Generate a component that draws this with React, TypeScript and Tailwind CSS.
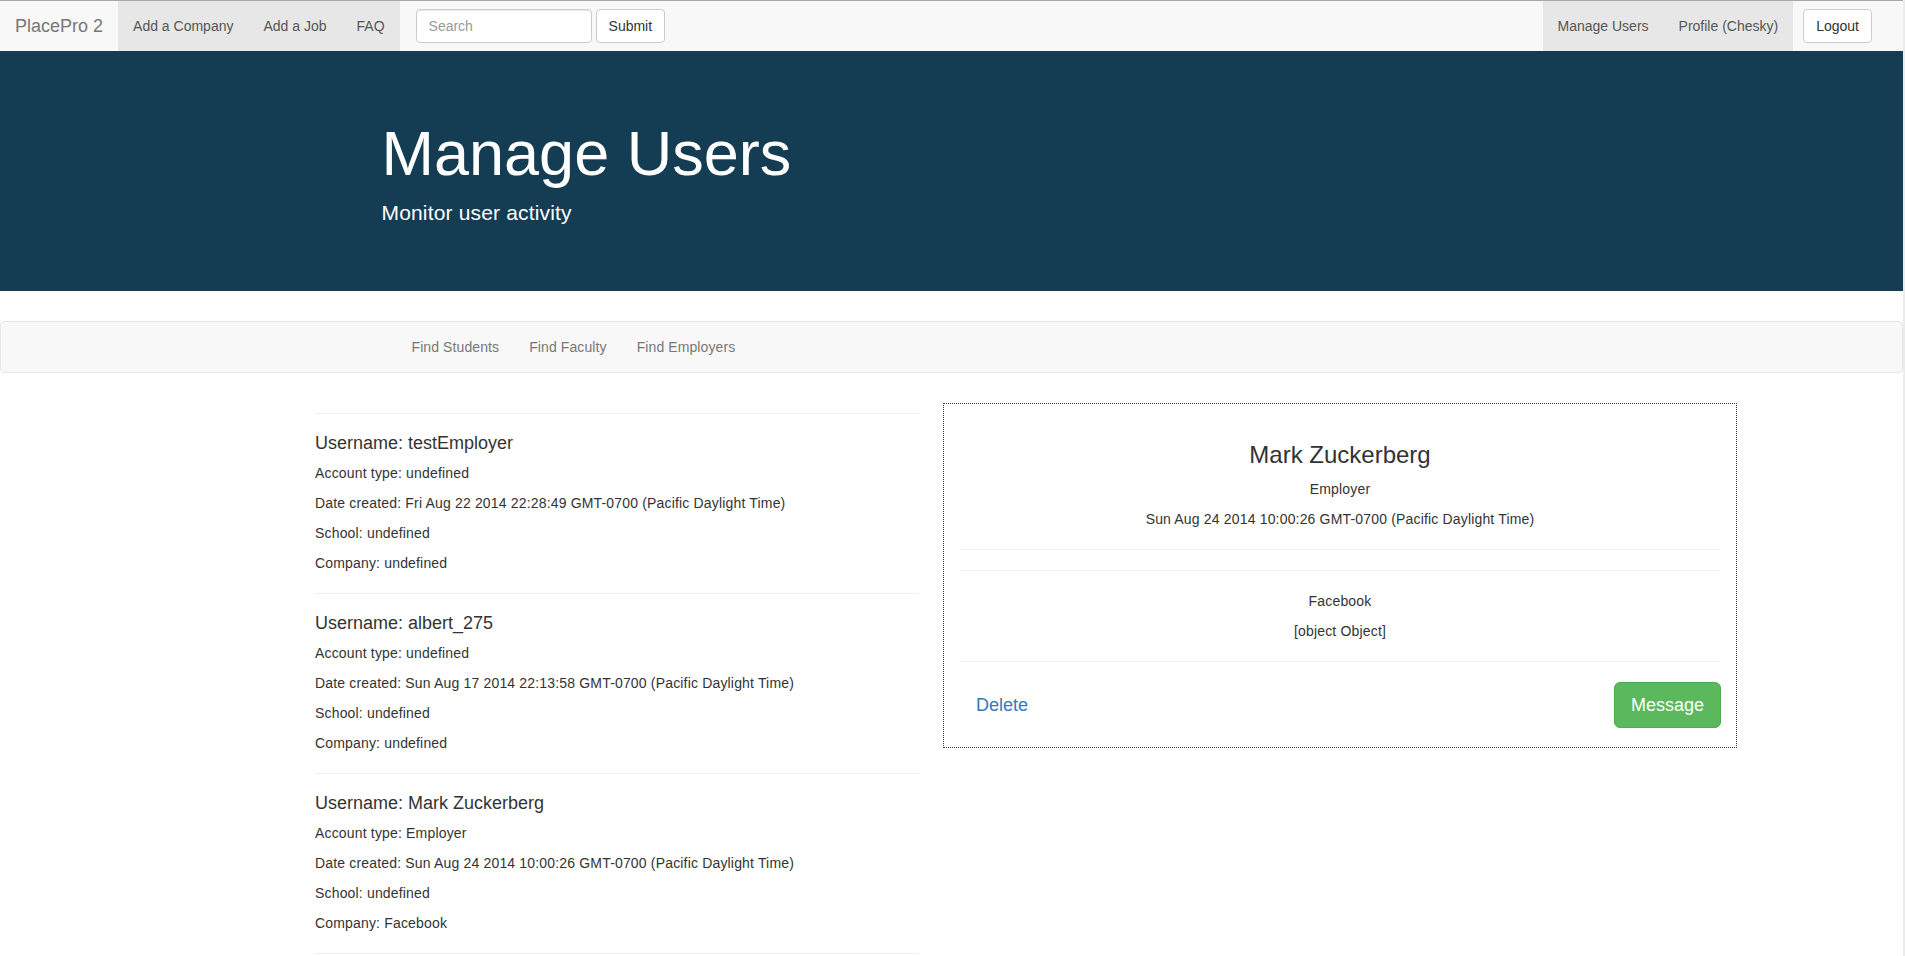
const users = [
  {
    username: 'testEmployer',
    accountType: 'undefined',
    created: 'Fri Aug 22 2014 22:28:49 GMT-0700 (Pacific Daylight Time)',
    school: 'undefined',
    company: 'undefined',
  },
  {
    username: 'albert_275',
    accountType: 'undefined',
    created: 'Sun Aug 17 2014 22:13:58 GMT-0700 (Pacific Daylight Time)',
    school: 'undefined',
    company: 'undefined',
  },
  {
    username: 'Mark Zuckerberg',
    accountType: 'Employer',
    created: 'Sun Aug 24 2014 10:00:26 GMT-0700 (Pacific Daylight Time)',
    school: 'undefined',
    company: 'Facebook',
  },
];

function NavItem({ label }: { label: string }) {
  return (
    <a className="block px-[15px] leading-[50px] text-[14px] text-[#555] bg-[#e7e7e7]">
      {label}
    </a>
  );
}

function TopNav() {
  return (
    <nav className="h-[51px] border-t border-[#a9a9a9] bg-[#f8f8f8] flex items-stretch">
      <a className="px-[15px] leading-[50px] text-[18px] text-[#777]">PlacePro 2</a>
      <div className="flex">
        <NavItem label="Add a Company" />
        <NavItem label="Add a Job" />
        <NavItem label="FAQ" />
      </div>
      <form className="flex items-center gap-[4px] pl-[16px]">
        <input
          placeholder="Search"
          className="w-[176px] h-[34px] px-[12px] text-[14px] text-[#555] bg-white border border-[#ccc] rounded-[4px] shadow-[inset_0_1px_1px_rgba(0,0,0,0.075)] placeholder:text-[#999] outline-none"
        />
        <button
          type="button"
          className="h-[34px] px-[12px] text-[14px] text-[#333] bg-white border border-[#ccc] rounded-[4px]"
        >
          Submit
        </button>
      </form>
      <div className="ml-auto flex items-stretch pr-[31px]">
        <NavItem label="Manage Users" />
        <NavItem label="Profile (Chesky)" />
        <div className="flex items-center ml-[10px]">
          <button
            type="button"
            className="h-[34px] px-[12px] text-[14px] text-[#333] bg-white border border-[#ccc] rounded-[4px]"
          >
            Logout
          </button>
        </div>
      </div>
    </nav>
  );
}

function UserItem({ user }: { user: (typeof users)[number] }) {
  return (
    <div className="border-t border-[#eee] pt-[20px]">
      <h4 className="text-[18px] leading-[19px] mb-[10px] text-[#333]">Username: {user.username}</h4>
      <div className="text-[14px] leading-[20px] tracking-[0.17px]">
        <p className="mb-[10px]">Account type: {user.accountType}</p>
        <p className="mb-[10px]">Date created: {user.created}</p>
        <p className="mb-[10px]">School: {user.school}</p>
        <p className="mb-[20px]">Company: {user.company}</p>
      </div>
    </div>
  );
}

function DetailPanel() {
  return (
    <div className="w-[794px] mt-[10px] self-start border border-dotted border-[#333] px-[15px] pt-[18px] pb-[19px] text-center">
      <h3 className="mt-[20px] mb-[10px] text-[24px] leading-[26.4px] text-[#333]">Mark Zuckerberg</h3>
      <div className="text-[14px] leading-[20px] tracking-[0.17px]">
        <p className="mb-[10px]">Employer</p>
        <p>Sun Aug 24 2014 10:00:26 GMT-0700 (Pacific Daylight Time)</p>
        <hr className="mt-[20px] border-t border-[#eee]" />
        <hr className="mt-[20px] border-t border-[#eee]" />
        <p className="mt-[20px] mb-[10px]">Facebook</p>
        <p>[object Object]</p>
        <hr className="mt-[20px] border-t border-[#eee]" />
      </div>
      <div className="mt-[20px] flex items-center justify-between">
        <button
          type="button"
          className="px-[16px] py-[10px] border border-transparent text-[18px] leading-[24px] text-[#337ab7]"
        >
          Delete
        </button>
        <button
          type="button"
          className="px-[16px] py-[10px] border border-[#4cae4c] bg-[#5cb85c] rounded-[6px] text-[18px] leading-[24px] text-white"
        >
          Message
        </button>
      </div>
    </div>
  );
}

export default function App() {
  return (
    <div className="flex min-h-screen bg-white font-['Liberation_Sans',Arial,sans-serif] text-[#333]">
      <div className="w-[1903px] shrink-0">
        <TopNav />

        <div className="bg-[#143c52] pt-[48px] pb-[48px] mb-[30px]">
          <div className="w-[1170px] mx-auto px-[15px] text-white">
            <h1 className="mt-[20px] mb-[10px] text-[63px] leading-[69.3px]">Manage Users</h1>
            <p className="text-[21px] leading-[30px] mb-[15px] tracking-[0.17px]">Monitor user activity</p>
          </div>
        </div>

        <nav className="h-[52px] border border-[#e7e7e7] rounded-[4px] bg-[#f8f8f8] mb-[20px]">
          <div className="w-[1170px] mx-auto px-[30px] flex tracking-[0.1px]">
            <a className="px-[15px] leading-[50px] text-[14px] text-[#777]">Find Students</a>
            <a className="px-[15px] leading-[50px] text-[14px] text-[#777]">Find Faculty</a>
            <a className="px-[15px] leading-[50px] text-[14px] text-[#777]">Find Employers</a>
          </div>
        </nav>

        <div className="flex pl-[315px] pb-[20px]">
          <div className="w-[604px] pt-[20px]">
            {users.map((u) => (
              <UserItem key={u.username} user={u} />
            ))}
            <div className="border-t border-[#eee]" />
          </div>
          <div className="w-[24px] shrink-0" />
          <DetailPanel />
        </div>
      </div>
      <div className="w-[2px] bg-[#ececec]" />
    </div>
  );
}
